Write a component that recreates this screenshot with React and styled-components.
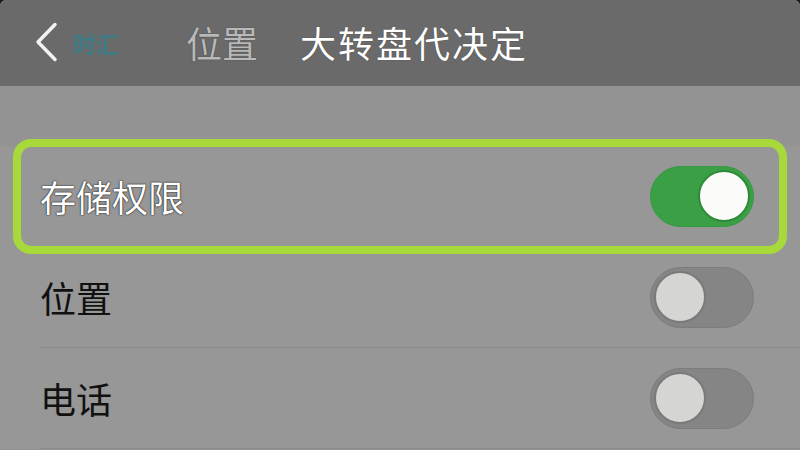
import React from "react";
import styled, { createGlobalStyle } from "styled-components";

const GlobalStyle = createGlobalStyle`
  html, body {
    margin: 0;
    padding: 0;
    background: #1a1a1a;
  }
  body {
    font-family: "Noto Sans CJK SC", "Noto Sans", sans-serif;
  }
`;

const Screen = styled.div`
  width: 800px;
  height: 450px;
  overflow: hidden;
  background: #939393;
  border-radius: 6px 6px 0 0;
`;

const NavBar = styled.div`
  height: 86px;
  background: #6a6a6a;
  display: flex;
  align-items: center;
  padding-left: 35px;
  box-sizing: border-box;
`;

const BackButton = styled.div`
  width: 23px;
  height: 40px;
  display: flex;
  margin-right: 15px;
  margin-top: -2px;
`;

const BackLabel = styled.span`
  font-family: "Noto Sans CJK SC", sans-serif;
  font-weight: 700;
  font-size: 23px;
  color: #3f7b84;
  filter: blur(0.5px);
  margin-right: 67px;
`;

const NavTab = styled.span`
  font-size: 36px;
  line-height: 1;
  margin-top: -2px;
  color: ${({ active }) => (active ? "#ffffff" : "#b9b9b9")};
  letter-spacing: ${({ active }) => (active ? "2px" : "0")};
  margin-right: ${({ active }) => (active ? "0" : "42px")};
  text-shadow: 0 0 1px rgba(0, 0, 0, 0.6);
`;

const SectionGap = styled.div`
  height: 60px;
`;

const List = styled.div`
  background: #979797;
`;

const Row = styled.div`
  position: relative;
  height: 101px;
`;

const RowInner = styled.div`
  height: 100px;
  margin-left: 40px;
  padding-right: 46px;
  display: flex;
  align-items: center;
  justify-content: space-between;
  border-bottom: 1px solid ${({ divider }) => (divider ? "#8a8a8a" : "transparent")};
`;

const Label = styled.span`
  font-size: 36px;
  line-height: 1;
  color: ${({ light }) => (light ? "#ffffff" : "#111111")};
  text-shadow: ${({ light }) =>
    light ? "0 0 2px rgba(0,0,0,0.7), 0 0 1px #000" : "none"};
`;

const Highlight = styled.div`
  position: absolute;
  left: 13px;
  right: 13px;
  top: -7px;
  bottom: -7px;
  border: 8px solid #a7d93b;
  border-radius: 18px;
  pointer-events: none;
`;

const Track = styled.div`
  width: 104px;
  height: 61px;
  border-radius: 31px;
  box-sizing: border-box;
  display: flex;
  align-items: center;
  justify-content: ${({ on }) => (on ? "flex-end" : "flex-start")};
  padding: 0 3px;
  background: ${({ on }) => (on ? "#3b9f45" : "#858585")};
  border: 1px solid ${({ on }) => (on ? "#369a40" : "#7c7c7c")};
`;

const Knob = styled.div`
  width: 52px;
  height: 52px;
  border-radius: 50%;
  box-sizing: border-box;
  background: ${({ on }) => (on ? "#fbfbf9" : "#d5d5d3")};
  border: 2px solid ${({ on }) => (on ? "#2f8a38" : "#7a7a7a")};
`;

const Toggle = ({ on }) => (
  <Track on={on}>
    <Knob on={on} />
  </Track>
);

const rows = [
  { label: "存储权限", on: true, highlight: true },
  { label: "位置", on: false },
  { label: "电话", on: false },
];

export default function App() {
  return (
    <>
      <GlobalStyle />
      <Screen>
        <NavBar>
          <BackButton>
            <svg width="23" height="40" viewBox="0 0 23 40">
              <path
                d="M20 2.5 L3 20 L20 37.5"
                fill="none"
                stroke="#f2f2f2"
                strokeWidth="3.5"
                strokeLinecap="round"
                strokeLinejoin="round"
              />
            </svg>
          </BackButton>
          <BackLabel>时汇</BackLabel>
          <NavTab>位置</NavTab>
          <NavTab active>大转盘代决定</NavTab>
        </NavBar>
        <SectionGap />
        <List>
          {rows.map((row) => (
            <Row key={row.label}>
              <RowInner divider={!row.highlight}>
                <Label light={row.highlight}>{row.label}</Label>
                <Toggle on={row.on} />
              </RowInner>
              {row.highlight && <Highlight />}
            </Row>
          ))}
        </List>
      </Screen>
    </>
  );
}
